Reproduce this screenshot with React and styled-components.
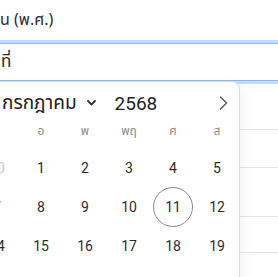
import React from "react";
import styled, { createGlobalStyle } from "styled-components";

const GlobalStyle = createGlobalStyle`
  html, body { margin: 0; padding: 0; background: #ffffff; }
  body {
    font-family: "Noto Sans Thai", "Roboto", "Noto Sans", "DejaVu Sans", sans-serif;
    color: #2b2b2b;
    overflow: hidden;
  }
`;

const Page = styled.div`
  position: relative;
  width: 278px;
  height: 277px;
  overflow: hidden;
  display: flex;
  flex-direction: column;
`;

const Label = styled.div`
  padding-top: 8px;
  height: 24px;
  line-height: 24px;
  font-size: 16px;
  color: #2f2f2f;
  margin-bottom: 11px;
  white-space: nowrap;
`;

const Field = styled.div`
  position: relative;
  margin-left: -12px;
  width: calc(100% + 40px);
`;

const Input = styled.div`
  box-sizing: border-box;
  height: 38px;
  padding-left: 12px;
  display: flex;
  align-items: center;
  font-size: 17px;
  color: #2b2b2b;
  background: #fff;
  border: 1px solid #86b7fe;
  box-shadow: 0 0 0 3px rgba(13, 110, 253, 0.25);
  white-space: nowrap;
`;

const Rows = styled.div`
  display: flex;
  flex-direction: column;
`;

const Row = styled.div`
  box-sizing: border-box;
  height: ${(p) => p.$h}px;
  border-bottom: 1px solid #e6e6e6;
`;

const Popup = styled.div`
  position: absolute;
  top: 81px;
  left: -70px;
  width: 310px;
  box-sizing: border-box;
  background: #fff;
  border: 1px solid #dcdcdc;
  border-radius: 8px;
  box-shadow: 0 6px 16px rgba(0, 0, 0, 0.08);
  padding-bottom: 12px;
`;

const Header = styled.div`
  height: 42px;
  display: flex;
  align-items: center;
`;

const NavButton = styled.button`
  width: 32px;
  height: 32px;
  border: 0;
  padding: 0;
  background: transparent;
  display: flex;
  align-items: center;
  justify-content: center;
  color: #555;
  margin-left: ${(p) => (p.$right ? "auto" : "0")};
`;

const MonthSelect = styled.div`
  margin-left: 39px;
  display: flex;
  align-items: center;
  gap: 10px;
  font-size: 19px;
  color: #222;
`;

const Year = styled.div`
  margin-left: 19px;
  font-size: 19px;
  color: #222;
  font-family: "Roboto", "Noto Sans", sans-serif;
`;

const DayNames = styled.div`
  display: grid;
  grid-template-columns: repeat(7, 44px);
  height: 14px;
  align-items: center;
`;

const DayName = styled.div`
  text-align: center;
  font-size: 12px;
  color: #8c8c8c;
  line-height: 14px;
`;

const Dates = styled.div`
  margin-top: 10px;
  display: grid;
  grid-template-columns: repeat(7, 44px);
  grid-auto-rows: 39px;
`;

const Cell = styled.div`
  display: flex;
  align-items: center;
  justify-content: center;
`;

const DayNum = styled.div`
  box-sizing: border-box;
  width: 40px;
  height: 40px;
  flex: none;
  border-radius: 50%;
  display: flex;
  align-items: center;
  justify-content: center;
  font-family: "Roboto", "Noto Sans", sans-serif;
  font-size: 14px;
  color: ${(p) => (p.$muted ? "#c9c9c9" : "#2b2b2b")};
  border: 1px solid ${(p) => (p.$today ? "#8a8a8a" : "transparent")};
`;

const dayNames = ["อา", "จ", "อ", "พ", "พฤ", "ศ", "ส"];
const weeks = [
  [[29, 1], [30, 1], [1], [2], [3], [4], [5]],
  [[6], [7], [8], [9], [10], [11], [12]],
  [[13], [14], [15], [16], [17], [18], [19]],
  [[20], [21], [22], [23], [24], [25], [26]],
];
const rowHeights = [49, 38, 49, 36, 40, 40];

export default function App() {
  return (
    <>
      <GlobalStyle />
      <Page>
        <Label>น (พ.ศ.)</Label>
        <Field>
          <Input>ที่</Input>
        </Field>
        <Rows>
          {rowHeights.map((h, i) => (
            <Row key={i} $h={h} />
          ))}
        </Rows>
        <Popup>
          <Header>
            <NavButton aria-label="previous">
              <svg width="9" height="14" viewBox="0 0 9 14" fill="none">
                <path d="M7.5 1L1.5 7l6 6" stroke="#555" strokeWidth="1.3" strokeLinecap="round" strokeLinejoin="round" />
              </svg>
            </NavButton>
            <MonthSelect>
              <span>กรกฎาคม</span>
              <svg width="9" height="6" viewBox="0 0 9 6" fill="none">
                <path d="M1 1l3.5 3.5L8 1" stroke="#333" strokeWidth="1.8" strokeLinecap="round" strokeLinejoin="round" />
              </svg>
            </MonthSelect>
            <Year>2568</Year>
            <NavButton $right aria-label="next">
              <svg width="9" height="14" viewBox="0 0 9 14" fill="none">
                <path d="M1.5 1l6 6-6 6" stroke="#555" strokeWidth="1.3" strokeLinecap="round" strokeLinejoin="round" />
              </svg>
            </NavButton>
          </Header>
          <DayNames>
            {dayNames.map((d) => (
              <DayName key={d}>{d}</DayName>
            ))}
          </DayNames>
          <Dates>
            {weeks.flat().map(([n, muted], i) => (
              <Cell key={i}>
                <DayNum $muted={!!muted} $today={n === 11 && !muted}>
                  {n}
                </DayNum>
              </Cell>
            ))}
          </Dates>
        </Popup>
      </Page>
    </>
  );
}
